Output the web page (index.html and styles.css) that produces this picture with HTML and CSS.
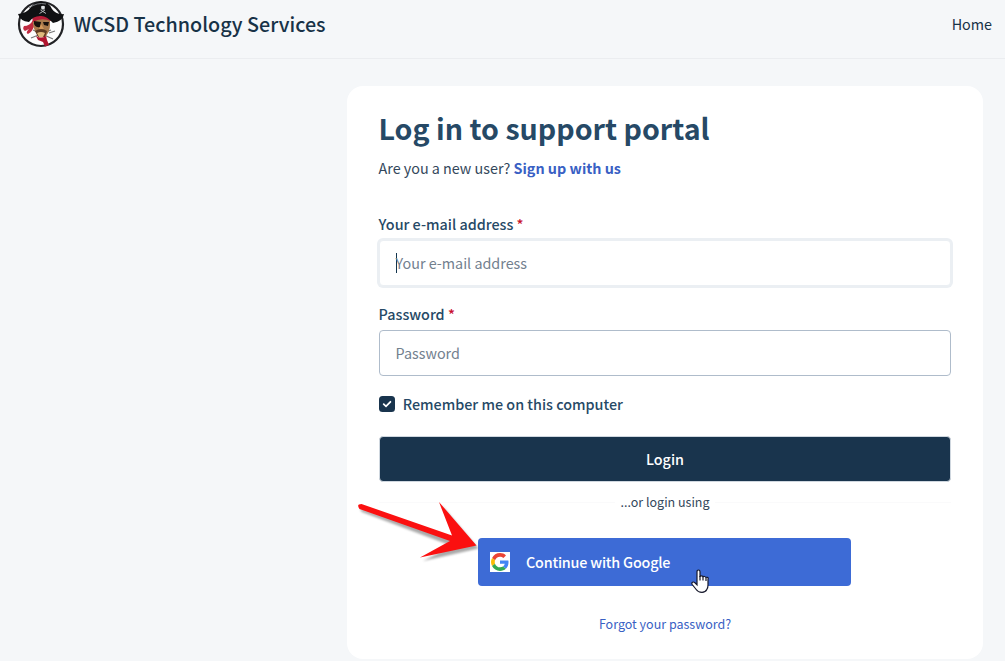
FILE: index.html
```html
<!DOCTYPE html>
<html lang="en">
<head>
<meta charset="utf-8">
<title>WCSD Technology Services</title>
<link rel="stylesheet" href="styles.css">
</head>
<body>
<header class="site-header">
  <div class="brand">
    <svg class="logo" width="48" height="48" viewBox="0 0 48 48">
      <circle cx="24" cy="24" r="22" fill="#fdfdfd" stroke="#222326" stroke-width="2.2"/>
      <path d="M16 30L36 39M34 30L14 38M17 25L11 26M32 33L38 31" stroke="#777" stroke-width="1.2"/>
      <path d="M16 20Q13 26 7 26Q5 29 8 31L12 29Q8 33 11 34Q16 31 17 26Z" fill="#c02a40"/>
      <path d="M16 18H33V25Q33 31 29 36Q24 39 20 34Q15 28 16 18Z" fill="#a87a4c"/>
      <path d="M18 31Q24 27 30 31L28 37H21Z" fill="#5e3b22"/>
      <path d="M20 33Q24 31 28 33L26 37H22Z" fill="#dfb97c"/>
      <path d="M15 17Q24 13 34 17V21Q24 17 16 22Z" fill="#b81c38"/>
      <path d="M17 21L24 22L23 27Q19 28 17 24ZM26 22H32L31 26L27 25Z" fill="#17100d"/>
      <path d="M24 24L27 29H22Z" fill="#d49a5c"/>
      <path d="M19 36Q24 39 29 36L30 40L32 45L28 46.500L26 42L21 40Z" fill="#b0142e"/>
      <path d="M1 14Q9 14 14 7Q17 2 24 1.500Q32 2 35 9Q39 15 47 14Q46 21 36 23Q29 15 23 16Q16 16 12 22Q3 21 1 14Z" fill="#101113"/>
      <path d="M12 8Q20 2 29 4" fill="none" stroke="#777b80" stroke-width="1"/>
      <path d="M24 6.500Q26 5 28 6.500L27.500 9.500H24.500Z" fill="#dce0e2"/>
      <path d="M22.500 13.500L28 10M23.500 10L29 13.500" stroke="#b3b7ba" stroke-width="1"/>
    </svg>
    <span class="brand-name">WCSD Technology Services</span>
  </div>
  <a class="home">Home</a>
</header>
<main class="card">
  <h1 class="title">Log in to support portal</h1>
  <p class="signup">Are you a new user? <a class="signup-link">Sign up with us</a></p>
  <div class="field">
    <label class="label">Your e-mail address <span class="req">*</span></label>
    <div class="input focused"><i class="caret"></i><span>Your e-mail address</span></div>
  </div>
  <div class="field second">
    <label class="label">Password <span class="req">*</span></label>
    <div class="input"><span>Password</span></div>
  </div>
  <div class="remember">
    <svg class="check" width="16" height="16" viewBox="0 0 16 16"><rect width="16" height="16" rx="3.5" fill="#19344d"/><path d="M4.700 8.200L7 10.300L11.400 5.800" fill="none" stroke="#fff" stroke-width="1.800" stroke-linecap="round"/></svg>
    <span>Remember me on this computer</span>
  </div>
  <div class="login">Login</div>
  <div class="divider"><span>...or login using</span></div>
  <div class="google">
    <svg class="g-logo" width="20" height="20" viewBox="-3 -3 54 54"><path fill="#fff" d="M-3-3h54v54H-3z"/><path fill="#ea4335" d="M24 9.500c3.500 0 6.700 1.200 9.200 3.600l6.900-6.900C35.900 2.400 30.500 0 24 0 14.600 0 6.500 5.400 2.600 13.200l8 6.200C12.400 13.700 17.700 9.500 24 9.500z"/><path fill="#4285f4" d="M47 24.600c0-1.600-.2-3.100-.4-4.600H24v9h12.900c-.6 3-2.200 5.500-4.800 7.200l7.700 6C44.400 38 47 32 47 24.600z"/><path fill="#fbbc05" d="M10.500 28.600a14.500 14.500 0 010-9.200l-8-6.200a24 24 0 000 21.600z"/><path fill="#34a853" d="M24 48c6.500 0 11.900-2.100 15.800-5.800l-7.700-6c-2.100 1.400-4.900 2.300-8.100 2.300-6.300 0-11.600-4.200-13.500-9.900l-8 6.200C6.500 42.600 14.600 48 24 48z"/></svg>
    <span class="g-text">Continue with Google</span>
  </div>
  <a class="forgot">Forgot your password?</a>
</main>
<svg class="arrow" width="150" height="80" viewBox="350 495 150 80">
  <path d="M361 506.500L456 537L439.500 502L476.500 545.500L421 558L450 543L360 509Q356 505 361 506.500Z" class="arrow-shadow"/>
  <path d="M361.500 504L452 535.500L439 502L476.500 545.500L420 557.500L450 541L359.500 509Q356 504 361.500 504Z" fill="#fb1010"/>
</svg>
<svg class="pointer" width="20" height="26" viewBox="0 0 20 26">
  <path d="M6 14V2.700Q6 1 7.500 1T9 2.700V8Q9 6.700 10.500 6.800T12 8.300Q12 7.300 13.500 7.500T15 9Q15 8 16.300 8.300T17 10V16Q17 19 15.800 20.500Q14.500 23.300 11 23.300Q7 23.300 5.200 20.500L1.200 15.500Q.3 14 1.500 13.200Q2.700 12.600 4.200 14L6 15.800Z" fill="#fff" stroke="#16182b" stroke-width="1.200"/>
  <path d="M9 7V11.500M12 8V11.500M15 9V12" stroke="#16182b" stroke-width="1.200"/>
</svg>
</body>
</html>
```
FILE: styles.css
```css
* { box-sizing: border-box; }
body {
  margin: 0;
  height: 661px;
  overflow: hidden;
  background: #f5f7f9;
  color: #33475b;
  font: 400 14.35px/24px "Noto Sans CJK SC", "Noto Sans", sans-serif;
}
.site-header {
  display: flex;
  justify-content: space-between;
  align-items: flex-start;
  height: 59px;
  padding: 0 13px 0 17px;
  border-bottom: 1px solid #ebedf0;
}
.brand { display: flex; gap: 8.5px; }
.brand-name {
  color: #183247;
  font-size: 19.75px;
  font-weight: 500;
  line-height: 48px;
  white-space: nowrap;
}
.home { line-height: 48px; color: #183247; }
.card {
  display: flex;
  flex-direction: column;
  width: 636px;
  height: 573px;
  margin: 27px 0 0 347px;
  padding: 22px 32px 0;
  border-radius: 16px;
  background: #fff;
}
.title {
  margin: 0 0 0 -0.5px;
  color: #264966;
  font-size: 28.6px;
  font-weight: 700;
  line-height: 40px;
}
.signup { margin: 8px 0 0 -0.5px; }
.signup-link { color: #395fc4; font-weight: 700; }
.field { margin-top: 32px; }
.field.second { margin-top: 16px; }
.label { display: block; margin-left: -0.4px; color: #264966; font-weight: 500; }
.req { color: #c8102e; }
.input {
  display: flex;
  align-items: center;
  height: 46px;
  margin-top: 4px;
  padding: 0 15.6px;
  border: 1px solid #afbccb;
  border-radius: 4px;
  background: #fff;
  color: #72808e;
}
.focused { border-color: #ebeff3; box-shadow: 0 0 0 2px #ebeff3; }
.caret { width: 1px; height: 20px; margin-right: -1px; background: #12344d; }
.remember {
  display: flex;
  align-items: center;
  gap: 7.7px;
  margin-top: 16px;
  color: #264966;
  font-weight: 500;
}
.login {
  display: flex;
  align-items: center;
  justify-content: center;
  height: 46px;
  margin-top: 20px;
  border: 1px solid #cfd7df;
  border-radius: 4px;
  background: #19344d;
  color: #fff;
  font-weight: 500;
}
.divider {
  display: flex;
  align-items: center;
  gap: 5px;
  margin-top: 8px;
  font-size: 12.5px;
}
.divider::before, .divider::after { content: ""; flex: 1; height: 1px; background: #fafafb; }
.google {
  display: flex;
  align-items: center;
  gap: 16px;
  width: 373px;
  height: 48px;
  margin: 24px 0 0 99px;
  padding: 0 12px;
  border-radius: 4px;
  background: #3d6bd6;
  color: #fff;
  font-weight: 500;
}
.g-text { letter-spacing: -0.2px; }
.forgot { margin-top: 26px; text-align: center; color: #395fc4; font-size: 12.5px; }
.arrow { position: absolute; left: 350px; top: 495px; }
.arrow-shadow { fill: #555; opacity: .5; filter: blur(1.2px); transform: translate(2px, 3px); }
.pointer { position: absolute; left: 691px; top: 569px; }
```
